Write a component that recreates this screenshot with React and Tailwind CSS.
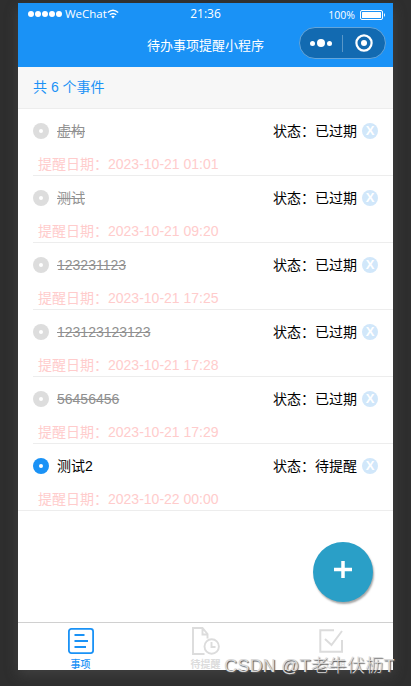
import React, { useState } from 'react';

const initialItems = [
  { id: 1, title: '虚构', date: '2023-10-21 01:01', expired: true },
  { id: 2, title: '测试', date: '2023-10-21 09:20', expired: true },
  { id: 3, title: '123231123', date: '2023-10-21 17:25', expired: true },
  { id: 4, title: '123123123123', date: '2023-10-21 17:28', expired: true },
  { id: 5, title: '56456456', date: '2023-10-21 17:29', expired: true },
  { id: 6, title: '测试2', date: '2023-10-22 00:00', expired: false },
];

const StatusBar = () => (
  <div className="grid h-[22px] grid-cols-3 items-center px-[9px] text-xs text-white">
    <div className="flex items-center pl-px">
      <div className="flex gap-[1px]">
        {[0, 1, 2, 3, 4].map((dot) => (
          <span key={dot} className="h-[6px] w-[6px] rounded-full bg-white" />
        ))}
      </div>
      <span className="ml-[3px] font-['Open_Sans',sans-serif] text-[11.5px] font-medium leading-[22px]">WeChat</span>
      <svg className="h-[10px] w-[12px]" viewBox="0 0 12 10" fill="none" stroke="currentColor" strokeWidth="1.4">
        <path d="M0.8 3.6 Q6 -1 11.2 3.6" />
        <path d="M2.8 5.8 Q6 3 9.2 5.8" />
        <path d="M4.2 7.4 Q6 6 7.8 7.4 L6 9.4 Z" fill="currentColor" stroke="none" />
      </svg>
    </div>
    <span className="text-center font-['Open_Sans',sans-serif] text-[12px] font-medium leading-[22px]">21:36</span>
    <div className="flex items-center justify-end">
      <span className="pt-[2px] font-['Open_Sans',sans-serif] text-[10.5px] font-medium">100%</span>
      <svg className="-mr-[2px] ml-[5px] mt-[2px] h-[10px] w-[26px]" viewBox="0 0 26 10">
        <rect x="0.5" y="0.5" width="22" height="9" rx="1.5" fill="none" stroke="white" />
        <rect x="2" y="2" width="19" height="6" rx="0.5" fill="white" />
        <path d="M24 3 Q26 5 24 7 Z" fill="white" />
      </svg>
    </div>
  </div>
);

const Header = () => (
  <header className="relative h-16 shrink-0 bg-[#1a92f6]">
    <StatusBar />
    <h1 className="h-[42px] text-center text-[13px] leading-[41px] text-white">待办事项提醒小程序</h1>
    <div className="absolute right-[7px] top-6 flex h-8 w-[87px] items-center rounded-full border border-[#64a5da] bg-[#126ab1]">
      <button className="flex flex-1 items-center justify-center gap-[2px]" aria-label="menu">
        <span className="h-[5px] w-[5px] rounded-full bg-white" />
        <span className="h-2 w-2 rounded-full bg-white" />
        <span className="h-[5px] w-[5px] rounded-full bg-white" />
      </button>
      <span className="h-[17px] w-px bg-[#5997c8]" />
      <button className="flex flex-1 justify-center" aria-label="close">
        <svg width="18" height="18" viewBox="0 0 18 18">
          <circle cx="9" cy="9" r="7.6" fill="none" stroke="white" strokeWidth="2.2" />
          <circle cx="9" cy="9" r="3" fill="white" />
        </svg>
      </button>
    </div>
  </header>
);

const TodoItem = ({ item, last, onRemove }) => (
  <li className={last ? 'h-[67px] border-b border-[#ededed] pl-[15px]' : 'ml-[15px] h-[67px] border-b border-[#ededed]'}>
    <div className="flex h-11 items-center pr-[15px]">
      <span className={`flex h-4 w-4 items-center justify-center rounded-full ${item.expired ? 'bg-[#dddddd]' : 'bg-[#1a92f6]'}`}>
        <span className="h-1 w-1 rounded-full bg-white" />
      </span>
      <span className={`ml-2 text-sm ${item.expired ? 'text-[#909090] line-through' : 'text-black'}`}>{item.title}</span>
      <span className="ml-auto text-sm text-black">状态：{item.expired ? '已过期' : '待提醒'}</span>
      <button
        onClick={() => onRemove(item.id)}
        className="ml-[5px] h-4 w-4 rounded-full bg-[#d1e7fa] text-center text-[13px] font-bold leading-4 text-white"
      >
        X
      </button>
    </div>
    <p className="pl-[5px] text-sm leading-[22px] text-[#ffcccc]">提醒日期：{item.date}</p>
  </li>
);

const TabBar = () => (
  <nav className="grid h-12 shrink-0 grid-cols-3 border-t border-[#d0d0d0] bg-white text-[10px] leading-[12px] text-[#dcdcdc]">
    <a className="flex flex-col items-center pt-1 text-[#1a92f6]">
      <svg width="28" height="28" viewBox="0 0 28 28" fill="none" stroke="currentColor" strokeWidth="1.8">
        <rect x="1.9" y="1.9" width="24.2" height="24.2" rx="2.5" />
        <path d="M7.5 8 H17.5 M7.5 14 H21 M7.5 20 H19" />
      </svg>
      <span className="mt-1 font-medium">事项</span>
    </a>
    <a className="flex flex-col items-center pt-1">
      <svg width="28" height="28" viewBox="0 0 28 28" fill="none" stroke="currentColor" strokeWidth="1.9">
        <path d="M12.5 27 H1 V1 H10.5 L15.5 7 V11.5 M10.5 1 V7.5 H15.5" />
        <circle cx="19.7" cy="19.5" r="7.2" />
        <path d="M19.5 15 V20 H23.5" />
      </svg>
      <span className="mt-1 font-bold">待提醒</span>
    </a>
    <a className="flex flex-col items-center pt-1">
      <svg width="28" height="28" viewBox="0 0 28 28" fill="none" stroke="currentColor" strokeWidth="2">
        <path d="M17 3.3 H3.3 V24.7 H25 V13 M8 12 L14.5 18 L25 4" />
      </svg>
      <span className="mt-1 font-bold">已过期</span>
    </a>
  </nav>
);

const App = () => {
  const [items, setItems] = useState(initialItems);

  const removeHandler = (id) => {
    setItems(items.filter((item) => item.id !== id));
  };

  return (
    <div className="relative h-[686px] w-[411px] overflow-hidden bg-[#2e2e2e] px-[18px] pt-[3px] font-['Liberation_Sans','Noto_Sans_CJK_SC',sans-serif]">
      <div className="relative flex h-[667px] w-[375px] flex-col bg-white shadow-[0_5px_12px_rgba(100,100,100,0.35)]">
        <Header />
        <div className="h-[42px] shrink-0 border-b border-[#ededed] bg-[#f7f7f7] pl-[15px] text-sm leading-[40px] text-[#1a92f6]">
          共 {items.length} 个事件
        </div>
        <ul className="flex-1">
          {items.map((item, index) => (
            <TodoItem key={item.id} item={item} last={index === items.length - 1} onRemove={removeHandler} />
          ))}
        </ul>
        <TabBar />
        <button
          aria-label="add"
          className="absolute bottom-[68px] right-5 flex h-[60px] w-[60px] justify-center rounded-full bg-[#2a9fc7] pt-[19px] shadow-[1px_2px_2px_rgba(0,0,0,0.35)]"
        >
          <svg width="18" height="18" viewBox="0 0 18 18" stroke="white" strokeWidth="3.5">
            <path d="M9 0 V17 M0 8.5 H18" />
          </svg>
        </button>
      </div>
      <div className="absolute left-[224px] top-[654px] whitespace-nowrap text-[18px] font-light leading-6 tracking-[0.2px] text-[#d8d8d8] [text-shadow:1px_1px_1px_#555]">
        CSDN @T老牛伏枥T
      </div>
    </div>
  );
};

export default App;
